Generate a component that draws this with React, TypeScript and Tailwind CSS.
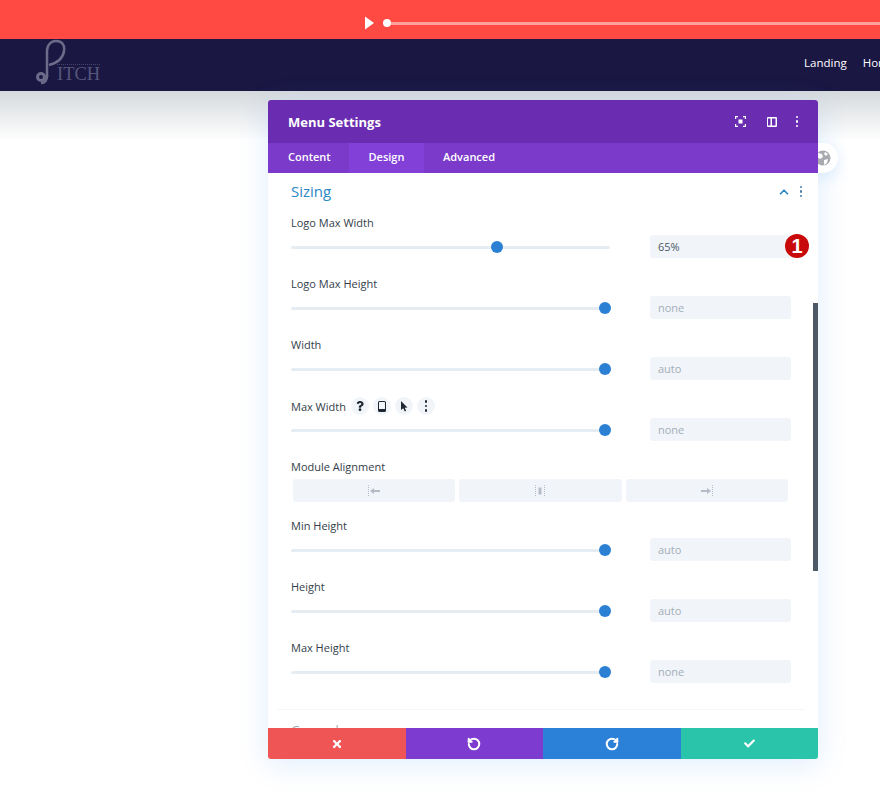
import { ReactNode } from "react";
import { FaCheck, FaTimes, FaQuestion } from "react-icons/fa";
import { LuRotateCcw, LuRotateCw, LuChevronUp } from "react-icons/lu";

function Dots({ className }: { className: string }) {
  return (
    <div className={`flex flex-col items-center gap-[2px] ${className}`}>
      <span className="w-[2.5px] h-[2.5px] rounded-full bg-current" />
      <span className="w-[2.5px] h-[2.5px] rounded-full bg-current" />
      <span className="w-[2.5px] h-[2.5px] rounded-full bg-current" />
    </div>
  );
}

function Label({ children }: { children: ReactNode }) {
  return <div className="h-[18px] text-[11px] leading-[17px] font-medium text-[#333e49]">{children}</div>;
}

function Slider({ pct = 96.5, value, active }: { pct?: number; value: string; active?: boolean }) {
  return (
    <div className="flex items-center h-[23px]">
      <div className="w-[319px] h-[3px] mt-[1px] rounded bg-[#e6edf2] relative">
        <span
          className="absolute top-[-4.5px] w-[12px] h-[12px] rounded-full bg-[#2b80d4]"
          style={{ left: `${pct}%` }}
        />
      </div>
      <div
        className={`ml-[40px] w-[141px] h-[23px] rounded-[3px] bg-[#f1f5f9] pl-2 text-[11px] leading-[23px] ${
          active ? "text-[#4c5866]" : "text-[#a3adb8]"
        }`}
      >
        {value}
      </div>
    </div>
  );
}

function Row({ label, ...rest }: { label: ReactNode; pct?: number; value: string; active?: boolean }) {
  return (
    <div className="h-[61px]">
      <Label>{label}</Label>
      <div className="mt-[3px]">
        <Slider {...rest} />
      </div>
    </div>
  );
}

function AlignIcon({ side }: { side: "left" | "center" | "right" }) {
  return (
    <svg width="14" height="14" viewBox="0 0 14 14" className="text-[#b4bdc7]">
      {side === "left" && (
        <>
          <path d="M1.5 1v12" stroke="currentColor" strokeDasharray="1 1" />
          <path d="M3 7l4-3v2h6v2H7v2z" fill="currentColor" />
        </>
      )}
      {side === "center" && (
        <>
          <path d="M2.5 1v12M11.5 1v12" stroke="currentColor" strokeDasharray="1 1" />
          <rect x="5.5" y="3.5" width="3" height="7" fill="currentColor" />
        </>
      )}
      {side === "right" && (
        <>
          <path d="M12.5 1v12" stroke="currentColor" strokeDasharray="1 1" />
          <path d="M11 7L7 4v2H1v2h6v2z" fill="currentColor" />
        </>
      )}
    </svg>
  );
}

function RoundIcon({ children }: { children: ReactNode }) {
  return (
    <span className="w-[18px] h-[18px] rounded-full bg-[#f1f5f9] flex items-center justify-center text-[#1f2933]">
      {children}
    </span>
  );
}

export default function App() {
  return (
    <div className="w-[880px] h-[804px] overflow-hidden bg-white font-['Open_Sans',sans-serif] relative">
      {/* Video bar */}
      <div className="h-[39px] bg-[#ff4a43] flex items-center pl-[365px] pt-[7px]">
        <svg width="9" height="14" viewBox="0 0 9 14">
          <path d="M0 0.5L9 7L0 13.5z" fill="#fff" />
        </svg>
        <span className="ml-[9px] w-[8px] h-[8px] rounded-full bg-white shrink-0" />
        <div className="h-[3px] flex-1 bg-[#ffa09b]" />
      </div>

      {/* Site nav */}
      <div className="h-[52px] bg-[#1b1743] pl-[36px] relative">
        <div className="flex items-end h-full pb-[6px]">
          <svg width="30" height="46" viewBox="0 0 30 46">
            <path
              d="M11 38V12C11 6 15 2 20 2c6 0 9 4 8 10-1 7-7 12-15 14"
              fill="none"
              stroke="#6c6b8a"
              strokeWidth="2.5"
            />
            <path d="M11 36c0 5-2 8-6 8" fill="none" stroke="#6c6b8a" strokeWidth="2.5" />
            <circle cx="5" cy="38" r="3.5" fill="none" stroke="#6c6b8a" strokeWidth="3" />
          </svg>
          <span className="-ml-[9px] mb-[1px] font-['Liberation_Serif',serif] text-[18.5px] leading-[19px] text-[#56567a] border-t border-dotted border-[#45446a]">
            ITCH
          </span>
        </div>
        <div className="flex whitespace-nowrap text-[11.5px] text-white font-medium absolute left-[804px] top-[15px] gap-[16px]">
          <span>Landing</span>
          <span>Home</span>
        </div>
      </div>

      {/* Page shade under the nav */}
      <div className="h-[713px] bg-gradient-to-b from-[#d6dadd] to-white to-[7%] pl-[268px] pt-[9px]">
        {/* Settings panel */}
        <div className="w-[550px] h-[659px] relative rounded-[3px] shadow-[0_5px_30px_rgba(43,135,244,0.15)]">
          <div className="absolute left-[548px] top-[43px] w-[22px] h-[30px] rounded-r-full bg-white flex items-center shadow-[0_5px_15px_rgba(43,135,244,0.15)]">
            <svg width="16" height="16" viewBox="0 0 16 16" className="-ml-[1px]">
              <circle cx="8" cy="8" r="7.5" fill="#a8aab0" />
              <path d="M3 3l4 1 1 3-3 2-3-2zM9 10l4-1-1 4-3 2zM10 2l3 2-2 2-2-2z" fill="#fff" />
            </svg>
          </div>

          <div className="relative h-full rounded-[3px] overflow-hidden bg-white flex flex-col">
            {/* Header */}
            <div className="h-[43px] bg-[#6a2cb0] flex items-center pl-[20px] pr-[20px] text-white shrink-0">
              <span className="text-[13px] leading-[20px] pt-[1px] font-bold flex-1">Menu Settings</span>
              <svg width="11" height="11" viewBox="0 0 11 11" fill="none" stroke="#fff" strokeWidth="1.2">
                <path d="M0.6 3V0.6H3M8 0.6h2.4V3M10.4 8v2.4H8M3 10.4H0.6V8" />
                <rect x="3.5" y="3.5" width="4" height="4" fill="#fff" stroke="none" />
              </svg>
              <svg width="10" height="10" viewBox="0 0 10 10" className="ml-[21px]">
                <path d="M1 0h8a1 1 0 011 1v8a1 1 0 01-1 1H1a1 1 0 01-1-1V1a1 1 0 011-1zm0 1.5v7h2.5v-7zm4 0v7h3.5v-7z" fill="#fff" fillRule="evenodd" />
              </svg>
              <Dots className="ml-[19px] text-white" />
            </div>

            {/* Tabs */}
            <div className="h-[30px] bg-[#7b3ac9] flex text-[11px] font-semibold text-white shrink-0">
              <div className="w-[81px] pl-[20px] leading-[28px]">Content</div>
              <div className="w-[75px] bg-[#8340d9] text-center leading-[28px]">Design</div>
              <div className="pl-[19px] leading-[28px]">Advanced</div>
            </div>

            {/* Options */}
            <div className="flex-1 min-h-0 overflow-hidden pl-[23px] pr-[27px]">
              <div className="flex items-center h-[37px] -mr-[11px]">
                <span className="text-[15px] text-[#2b87c4] flex-1">Sizing</span>
                <LuChevronUp className="text-[#2b87c4] w-[14px] h-[14px] mr-[9px]" strokeWidth={3} />
                <Dots className="text-[#4a7ca8]" />
              </div>
              <div className="pt-[4px]">
                <Row label="Logo Max Width" pct={62.7} value="65%" active />
                <Row label="Logo Max Height" value="none" />
                <Row label="Width" value="auto" />
                <Row
                  value="none"
                  label={
                    <span className="flex items-center">
                      Max Width
                      <span className="flex ml-[5px] gap-[4px]">
                        <RoundIcon>
                          <FaQuestion className="w-[10px] h-[10px]" />
                        </RoundIcon>
                        <RoundIcon>
                          <span className="w-[8px] h-[11px] border-[1.5px] border-b-[3px] border-[#1f2933] rounded-[1.5px]" />
                        </RoundIcon>
                        <RoundIcon>
                          <svg width="8" height="11" viewBox="0 0 8 11">
                            <path d="M1 0L1 9L3.2 7.2L4.8 10.5L6.2 9.8L4.7 6.7L7.5 6.5z" fill="#1f2933" />
                          </svg>
                        </RoundIcon>
                        <RoundIcon>
                          <Dots className="text-[#1f2933]" />
                        </RoundIcon>
                      </span>
                    </span>
                  }
                />
                <div className="h-[59px]">
                  <Label>Module Alignment</Label>
                  <div className="flex gap-[4px] ml-[2px] w-[495px] mt-[3px]">
                    <div className="flex-1 h-[23px] rounded-[3px] bg-[#f1f5f9] flex items-center justify-center">
                      <AlignIcon side="left" />
                    </div>
                    <div className="flex-1 h-[23px] rounded-[3px] bg-[#f1f5f9] flex items-center justify-center">
                      <AlignIcon side="center" />
                    </div>
                    <div className="flex-1 h-[23px] rounded-[3px] bg-[#f1f5f9] flex items-center justify-center">
                      <AlignIcon side="right" />
                    </div>
                  </div>
                </div>
                <Row label="Min Height" value="auto" />
                <Row label="Height" value="auto" />
                <Row label="Max Height" value="none" />
              </div>
              <div className="border-t border-[#f5f6f8] -mx-[14px] mt-[9px] pt-[11px] pl-[14px] text-[13px] text-[#a3adb8]">
                General
              </div>
            </div>

            {/* Footer actions */}
            <div className="h-[31px] flex text-white shrink-0 relative">
              <div className="flex-1 bg-[#ef5555] flex items-center justify-center">
                <FaTimes className="w-[12px] h-[12px]" />
              </div>
              <div className="flex-1 bg-[#7d3bcf] flex items-center justify-center">
                <LuRotateCcw className="w-[14px] h-[14px]" strokeWidth={3.5} />
              </div>
              <div className="flex-1 bg-[#2b80d8] flex items-center justify-center">
                <LuRotateCw className="w-[14px] h-[14px]" strokeWidth={3.5} />
              </div>
              <div className="flex-1 bg-[#29c4a9] flex items-center justify-center">
                <FaCheck className="w-[11px] h-[11px]" />
              </div>
            </div>

            {/* Scrollbar */}
            <div className="absolute right-0 top-[203px] w-[5px] h-[268px] bg-[#4c5866]" />

            {/* Step badge */}
            <div className="absolute left-[517px] top-[134px] w-[24px] h-[24px] rounded-full bg-[#c80a0a] text-white flex items-center justify-center text-[20px] font-bold leading-none font-['Liberation_Sans',sans-serif]">
              1
            </div>
          </div>
        </div>
      </div>
    </div>
  );
}
